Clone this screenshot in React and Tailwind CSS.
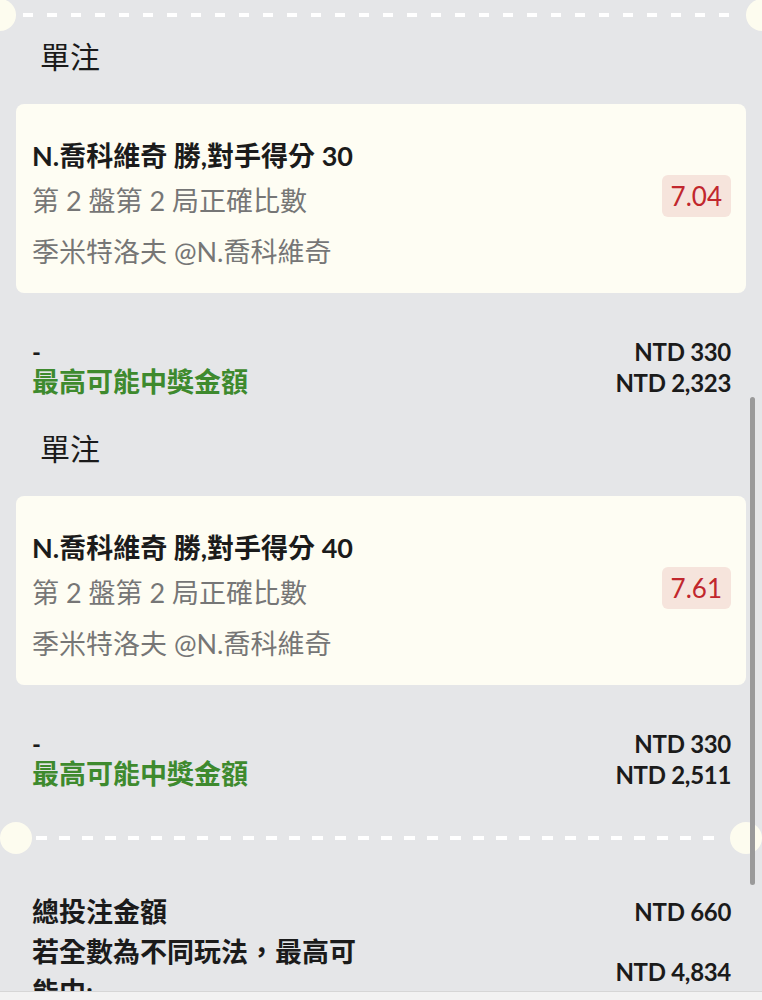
import React from "react";

const FONT = "font-['Lato','Noto_Sans_CJK_TC',sans-serif]";

function Bet({ score, odds, stake, win }) {
  return (
    <div>
      <div className="h-[74px] pt-[8px] pl-[40px] text-[30px] leading-[36px] text-[#1a1a1a]">單注</div>
      <div className="mx-[16px] h-[189px] rounded-[8px] bg-[#fefdf3] pl-[16px] pr-[15px] flex items-center">
        <div className="flex-1 flex flex-col pt-[32px] pb-[21px]">
          <div className="text-[27px] leading-[40px] font-bold text-[#1b1b1b] whitespace-nowrap">N.喬科維奇 勝,對手得分 {score}</div>
          <div className="mt-[5px] text-[27px] leading-[40px] text-[#767676] whitespace-nowrap">第 2 盤第 2 局正確比數</div>
          <div className="mt-[11px] text-[27px] leading-[40px] text-[#767676] whitespace-nowrap">季米特洛夫 @N.喬科維奇</div>
        </div>
        <div className="-mt-[5px] h-[42px] px-[9px] rounded-[6px] bg-[#f6e4dc] text-[#c1272d] text-[26px] leading-[42px]">{odds}</div>
      </div>
      <div className="mt-[43px] pl-[32px] pr-[31px]">
        <div className="flex justify-between items-center h-[31px]">
          <span className="text-[24px] font-bold text-[#1b1b1b]">-</span>
          <span className="text-[24px] font-bold text-[#1b1b1b] tracking-[-0.3px]">NTD {stake}</span>
        </div>
        <div className="flex justify-between items-center h-[31px]">
          <span className="text-[27px] font-bold text-[#3e8a2e]">最高可能中獎金額</span>
          <span className="text-[24px] font-bold text-[#1b1b1b] tracking-[-0.3px]">NTD {win}</span>
        </div>
      </div>
    </div>
  );
}

export default function App() {
  return (
    <div className={`${FONT} relative w-[762px] h-[1000px] overflow-hidden bg-[#e5e6e8] flex flex-col`}>
      <div className="h-[991px] overflow-hidden shrink-0">
        {/* top divider */}
        <div className="relative h-[30px] flex items-center pl-[23px] pr-[22px]">
          <div className="absolute left-[-16px] top-[-1px] w-[32px] h-[32px] rounded-full bg-[#fdfcef]" />
          <div className="flex-1 h-[4px] bg-[repeating-linear-gradient(90deg,#ffffff_0_10px,transparent_10px_24px)]" />
          <div className="absolute left-[746px] top-[-1px] w-[32px] h-[32px] rounded-full bg-[#fdfcef]" />
        </div>

        <Bet score="30" odds="7.04" stake="330" win="2,323" />
        <div className="h-[24px]" />
        <Bet score="40" odds="7.61" stake="330" win="2,511" />
        <div className="h-[33px]" />

        {/* bottom divider */}
        <div className="relative h-[30px] flex items-center pl-[36px] pr-[36px]">
          <div className="absolute left-0 top-[-1px] w-[32px] h-[32px] rounded-full bg-[#fdfcef]" />
          <div className="flex-1 h-[4px] bg-[repeating-linear-gradient(90deg,#ffffff_0_11px,transparent_11px_23px)]" />
          <div className="absolute left-[730px] top-[-1px] w-[32px] h-[32px] rounded-full bg-[#fdfcef]" />
        </div>

        <div className="mt-[39px] pl-[32px] pr-[31px]">
          <div className="flex justify-between items-center h-[40px]">
            <span className="text-[27px] font-bold text-[#1b1b1b]">總投注金額</span>
            <span className="text-[24px] font-bold text-[#1b1b1b] tracking-[-0.3px]">NTD 660</span>
          </div>
          <div className="flex justify-between items-center">
            <div className="w-[330px] text-[27px] leading-[40px] font-bold text-[#1b1b1b]">若全數為不同玩法，最高可能中:</div>
            <span className="text-[24px] font-bold text-[#1b1b1b] tracking-[-0.3px]">NTD 4,834</span>
          </div>
        </div>
      </div>
      <div className="flex-1 border-t border-[#d6d6d6] bg-[#f2f2f2]" />

      {/* scrollbar */}
      <div className="absolute left-[750px] top-[397px] w-[5px] h-[488px] rounded-full bg-[#9a9a9a]" />
    </div>
  );
}
